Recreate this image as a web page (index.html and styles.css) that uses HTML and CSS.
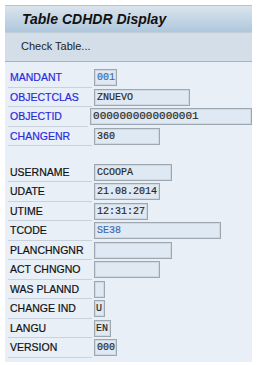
FILE: index.html
```html
<!DOCTYPE html>
<html lang="en">

<head>
    <meta charset="UTF-8">
    <meta name="viewport" content="width=device-width, initial-scale=1.0">
    <title>Table CDHDR Display</title>
    <link rel="stylesheet" href="styles.css">
</head>

<body>
    <div class="screen">
        <!-- Title -->
        <div class="title-bar">Table CDHDR Display</div>
        <!-- Toolbar -->
        <div class="toolbar">Check Table...</div>

        <!-- Fields -->
        <div class="form">
            <div class="row"><span class="label key">MANDANT</span><span class="field w-3 blue">001</span></div>
            <div class="row"><span class="label key">OBJECTCLAS</span><span class="field w-14">ZNUEVO</span></div>
            <div class="row"><span class="label key">OBJECTID</span><span class="field w-long">0000000000000001</span></div>
            <div class="row"><span class="label key">CHANGENR</span><span class="field w-10">360</span></div>

            <div class="spacer"></div>

            <div class="row"><span class="label">USERNAME</span><span class="field w-12">CCOOPA</span></div>
            <div class="row"><span class="label">UDATE</span><span class="field w-10">21.08.2014</span></div>
            <div class="row"><span class="label">UTIME</span><span class="field w-8">12:31:27</span></div>
            <div class="row"><span class="label">TCODE</span><span class="field w-20 blue">SE38</span></div>
            <div class="row"><span class="label">PLANCHNGNR</span><span class="field w-12"></span></div>
            <div class="row"><span class="label">ACT CHNGNO</span><span class="field w-10"></span></div>
            <div class="row"><span class="label">WAS PLANND</span><span class="field w-1"></span></div>
            <div class="row"><span class="label">CHANGE IND</span><span class="field w-1">U</span></div>
            <div class="row"><span class="label">LANGU</span><span class="field w-2">EN</span></div>
            <div class="row"><span class="label">VERSION</span><span class="field w-3">000</span></div>
        </div>
    </div>
</body>

</html>
```

FILE: styles.css
```css
/* Khung chung */
body {
    margin: 0;
    background-color: #fff;
    font-family: "Liberation Sans", Arial, sans-serif;
    overflow: hidden;
}

.screen {
    width: 247px;
    margin: 5px 0 0 5px;
    background-color: #e8eff7;
    padding-bottom: 4px;
}

/* Tiêu đề */
.title-bar {
    height: 26px;
    border-top: 1px solid #b4c4d2;
    background: linear-gradient(#dae4ed, #afc7dc);
    padding-left: 17px;
    font-size: 14px;
    font-weight: bold;
    font-style: italic;
    line-height: 26px;
    color: #111;
}

/* Thanh công cụ */
.toolbar {
    height: 28px;
    border-top: 1px solid #c0ced9;
    border-bottom: 1px solid #a3b4c3;
    background-color: #d3dee8;
    padding-left: 16px;
    font-size: 11px;
    line-height: 27px;
    color: #222;
}

/* Các dòng dữ liệu */
.form {
    padding-top: 6px;
}

.row {
    display: flex;
    align-items: center;
    height: 19.5px;
}

.spacer {
    height: 16.5px;
}

.label {
    box-sizing: border-box;
    width: 84px;
    height: 100%;
    margin-left: 3px;
    padding-left: 2px;
    border-bottom: 1px solid #c9d2db;
    font-size: 10.5px;
    line-height: 19px;
    color: #111;
    -webkit-text-stroke: 0.2px currentColor;
}

.label.key {
    color: #2b2bdc;
}

.field {
    box-sizing: border-box;
    height: 17px;
    margin-left: 2px;
    padding-left: 2px;
    border: 1px solid #9ea7b0;
    box-shadow: inset 0 0 0 1px #d0d9e2;
    background-color: #dfe9f3;
    font-family: "Liberation Mono", "Courier New", monospace;
    font-size: 10px;
    line-height: 15px;
    color: #2a2a2a;
    white-space: nowrap;
    overflow: hidden;
    -webkit-text-stroke: 0.2px currentColor;
}

.field.blue {
    color: #3a6cb0;
}

.w-1 { width: 11px; padding-left: 1px; }
.w-2 { width: 17px; padding-left: 1px; }
.w-3 { width: 23px; padding-left: 2px; }
.w-8 { width: 54px; }
.w-10 { width: 66px; }
.w-12 { width: 78px; }
.w-14 { width: 96px; }
.w-20 { width: 127px; }
.w-long { width: 170px; font-size: 11px; }
```
